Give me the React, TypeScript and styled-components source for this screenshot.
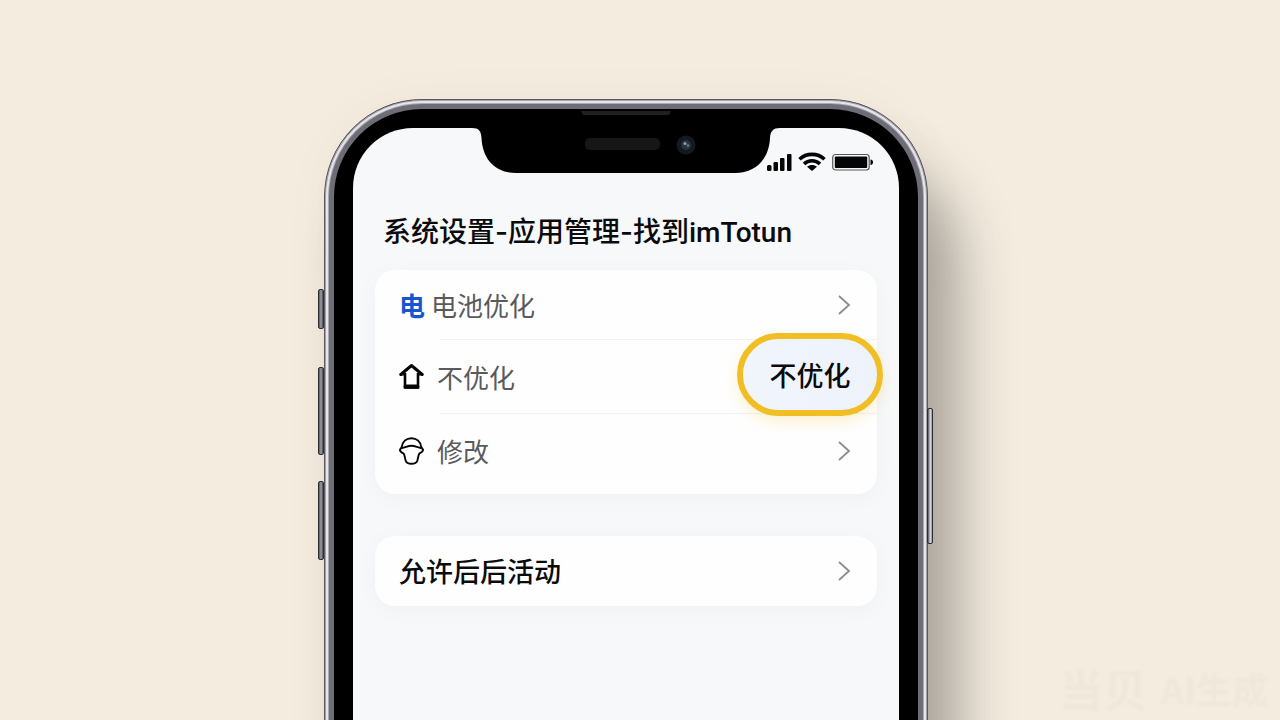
import React from "react";
import styled, { createGlobalStyle, css } from "styled-components";

const GlobalStyle = createGlobalStyle`
  * { box-sizing: border-box; }
  body {
    margin: 0;
    background: #f4ecdf;
    font-family: "Noto Sans CJK SC", sans-serif;
    color: #0b0b0d;
  }
  button { font: inherit; color: inherit; }
`;

const Stage = styled.div`
  position: relative;
  display: flex;
  justify-content: center;
  min-height: 100vh;
  padding: 99px 28px 0 0;
  overflow: hidden;
  background: #f4ecdf;
`;

const Phone = styled.div`
  position: relative;
  width: 100%;
  max-width: 604px;
  margin-bottom: -80px;
  padding: 28px 28px 0;
  border: 1px solid #5a595e;
  border-radius: 98px 98px 0 0;
  background: #000;
  box-shadow:
    inset 0 0 0 1px #a3a2aa,
    inset 0 0 0 3px #e6e5ec,
    inset 0 0 0 4px #aaa9b2,
    inset 0 0 0 9px #6e6d76,
    34px 64px 54px -2px rgba(84, 82, 80, 0.46),
    0 0 40px rgba(140, 120, 90, 0.06);
`;

const SideKey = styled.span<{ $side: "left" | "right"; $top: number; $length: number }>`
  position: absolute;
  top: ${(p) => p.$top}px;
  ${(p) => (p.$side === "left" ? css`left: -7px;` : css`right: -6px;`)}
  width: 6px;
  height: ${(p) => p.$length}px;
  border: 1px solid #2f2e33;
  border-radius: 2px;
  background: ${(p) =>
    p.$side === "left"
      ? "linear-gradient(90deg, #55545a, #a09fa6 50%, #4a494f)"
      : "linear-gradient(90deg, #55545a, #dddce2 60%, #8b8a90)"};
`;

const Screen = styled.main`
  position: relative;
  height: 100%;
  padding: 0 22px 32px;
  border-radius: 60px 60px 0 0;
  background: #f7f8fa;
`;

const NotchArt = styled.svg`
  position: absolute;
  top: -20px;
  left: 50%;
  margin-left: -154px;
  width: 308px;
  height: 66px;
`;

const StatusBar = styled.div`
  display: flex;
  justify-content: flex-end;
  align-items: flex-end;
  gap: 6px;
  height: 43px;
  padding-right: 3px;
`;

const Title = styled.h1`
  margin: 41px 0 17px;
  padding-left: 8px;
  font-family: Roboto, "Noto Sans CJK SC", sans-serif;
  font-size: 28px;
  line-height: 41px;
  font-weight: 500;
  white-space: nowrap;
`;

const Dash = styled.span`
  font-family: Inter, sans-serif;
`;

const Card = styled.section<{ $last?: boolean }>`
  margin-bottom: ${(p) => (p.$last ? 0 : 42)}px;
  padding-bottom: ${(p) => (p.$last ? 0 : 6)}px;
  border-radius: 20px;
  background: #fefefe;
  box-shadow: 0 4px 18px rgba(90, 110, 140, 0.05);
`;

const Row = styled.div<{ $tall?: boolean; $divided?: boolean; $gap?: number }>`
  position: relative;
  display: flex;
  align-items: center;
  gap: ${(p) => p.$gap ?? 12}px;
  height: ${(p) => (p.$tall ? 74 : 70)}px;
  padding: 0 26px 0 24px;
  ${(p) =>
    p.$divided &&
    css`
      background: linear-gradient(#f1f2f4, #f1f2f4) 64px 100% / 100% 1px no-repeat;
    `}
`;

const Glyph = styled.span`
  width: 26px;
  font-size: 26px;
  line-height: 38px;
  font-weight: 700;
  color: #1557d0;
`;

const Label = styled.span<{ $strong?: boolean }>`
  flex: 1;
  padding-bottom: 1px;
  font-size: ${(p) => (p.$strong ? 27 : 26)}px;
  line-height: 38px;
  font-weight: ${(p) => (p.$strong ? 500 : 400)};
  color: ${(p) => (p.$strong ? "#0b0b0d" : "#5a5a5d")};
`;

const OpenButton = styled.button`
  display: flex;
  padding: 0;
  border: 0;
  background: none;
`;

const ChoiceButton = styled.button`
  position: absolute;
  top: -7px;
  right: -6px;
  width: 146px;
  height: 83px;
  padding: 0;
  border: 6px solid #f2be25;
  border-radius: 42px;
  background: linear-gradient(90deg, #f1f6fd, #edf2fb);
  box-shadow: 0 6px 14px rgba(242, 190, 37, 0.2);
  font-size: 27px;
  line-height: 38px;
  font-weight: 500;
`;

const Watermark = styled.div`
  position: absolute;
  right: 12px;
  bottom: 0;
  display: flex;
  align-items: center;
  gap: 14px;
  font-size: 44px;
  line-height: 64px;
  font-weight: 700;
  color: #eee7da;
  filter: blur(1px);
`;

const WatermarkNote = styled.span`
  font-size: 36px;
`;

function Chevron() {
  return (
    <svg width="14" height="20" viewBox="0 0 14 20" fill="none" stroke="#8c8c8e" strokeWidth="1.8" aria-hidden="true">
      <path d="M2 1 L12 10 L2 19" />
    </svg>
  );
}

function Notch() {
  return (
    <NotchArt viewBox="0 0 308 66" aria-hidden="true">
      <path
        d="M0 20 C7 20 9 23 9.500 30 C10.500 51 23 65 44 65 H263 C284 65 297 51 298 30 C298.500 23 301 20 308 20 V12 H0 Z"
        fill="#000"
      />
      <path d="M109 3 H199 L197 7 H111 Z" fill="#202022" />
      <rect x="113" y="30" width="75" height="12" rx="5" fill="#161617" />
      <circle cx="214" cy="37" r="9.500" fill="#15181c" />
      <circle cx="214" cy="37" r="5" fill="#263442" />
      <circle cx="213" cy="35.500" r="1.500" fill="#8ba2b5" />
      <circle cx="216" cy="37.500" r="1.200" fill="#667f94" />
    </NotchArt>
  );
}

function SignalIcon() {
  return (
    <svg width="26" height="18" viewBox="0 0 26 18" fill="#050505" aria-hidden="true">
      <rect x="1" y="12" width="4.500" height="6" rx="1.500" />
      <rect x="7.500" y="9" width="4.500" height="9" rx="1.200" />
      <rect x="14" y="5" width="4.500" height="13" rx="1" />
      <rect x="21" y="1" width="4.500" height="17" rx="1" />
    </svg>
  );
}

function WifiIcon() {
  return (
    <svg width="28" height="19" viewBox="0 0 28 19" fill="none" stroke="#050505" strokeWidth="3.600" aria-hidden="true">
      <path d="M1.500 7.200 C8.500 0.700 19.500 0.700 26.500 7.200" />
      <path d="M6 12 C10.500 7.700 17.500 7.700 22 12" />
      <path d="M14 19 L9 14.800 C12 12.500 16 12.500 19 14.800 Z" fill="#050505" stroke="none" />
    </svg>
  );
}

function BatteryIcon() {
  return (
    <svg width="42" height="18" viewBox="0 0 42 18" aria-hidden="true">
      <rect x="0.700" y="1.500" width="36.500" height="15.500" rx="3" fill="none" stroke="#55585a" strokeWidth="1.200" />
      <rect x="2.800" y="3.600" width="32.400" height="11.400" rx="1" fill="#050505" />
      <path d="M38.500 6.500 C42 7 42 11.500 38.500 12 Z" fill="#050505" />
    </svg>
  );
}

function HomeIcon() {
  return (
    <svg width="26" height="28" viewBox="0 0 26 28" fill="none" stroke="#050505" strokeLinejoin="round" strokeLinecap="round" aria-hidden="true">
      <path d="M1.800 11.500 L12.500 2.500 L23.200 11.500" strokeWidth="3" />
      <path d="M2.200 11.300 H6 V24.500 H19 V11.300 H22.800" strokeWidth="2.600" strokeLinejoin="miter" />
      <path d="M6.800 23.600 H18.200" strokeWidth="4.400" />
    </svg>
  );
}

function PersonIcon() {
  return (
    <svg width="26" height="28" viewBox="0 0 26 28" fill="none" stroke="#050505" strokeWidth="1.900" strokeLinejoin="round" aria-hidden="true">
      <path d="M2.800 10 C3.500 4.500 7.500 1.200 12.500 1.200 C17.500 1.200 21.500 4.500 22.200 10" />
      <path d="M2.800 10 L0.900 12.800 C1 14.300 2.200 15.500 4.500 16.300 C5.800 18 5.700 20.500 6.600 23.500 C7.500 26.300 9.500 26.800 12.500 26.800 C15.500 26.800 17.500 26.300 18.400 23.500 C19.300 20.500 19.200 18 20.500 16.300 C22.800 15.500 24 14.300 24.100 12.800 L22.200 10" />
      <path d="M2.500 11.200 C6.500 10.800 8.500 8.800 12.500 8.800 C16.500 8.800 18.500 10.800 22.500 11.200" />
    </svg>
  );
}

export default function App() {
  return (
    <>
      <GlobalStyle />
      <Stage>
        <Phone>
          <SideKey $side="left" $top={189} $length={40} />
          <SideKey $side="left" $top={267} $length={88} />
          <SideKey $side="left" $top={381} $length={79} />
          <SideKey $side="right" $top={308} $length={136} />
          <Screen>
            <Notch />
            <StatusBar>
              <SignalIcon />
              <WifiIcon />
              <BatteryIcon />
            </StatusBar>
            <Title>
              系统设置<Dash>-</Dash>应用管理<Dash>-</Dash>找到imTotun
            </Title>
            <Card>
              <Row $divided $gap={6}>
                <Glyph>电</Glyph>
                <Label>电池优化</Label>
                <OpenButton aria-label="电池优化">
                  <Chevron />
                </OpenButton>
              </Row>
              <Row $tall $divided>
                <HomeIcon />
                <Label>不优化</Label>
                <ChoiceButton>不优化</ChoiceButton>
              </Row>
              <Row $tall>
                <PersonIcon />
                <Label>修改</Label>
                <OpenButton aria-label="修改">
                  <Chevron />
                </OpenButton>
              </Row>
            </Card>
            <Card $last>
              <Row>
                <Label $strong>允许后后活动</Label>
                <OpenButton aria-label="允许后后活动">
                  <Chevron />
                </OpenButton>
              </Row>
            </Card>
          </Screen>
        </Phone>
        <Watermark>
          当贝<WatermarkNote>AI生成</WatermarkNote>
        </Watermark>
      </Stage>
    </>
  );
}
